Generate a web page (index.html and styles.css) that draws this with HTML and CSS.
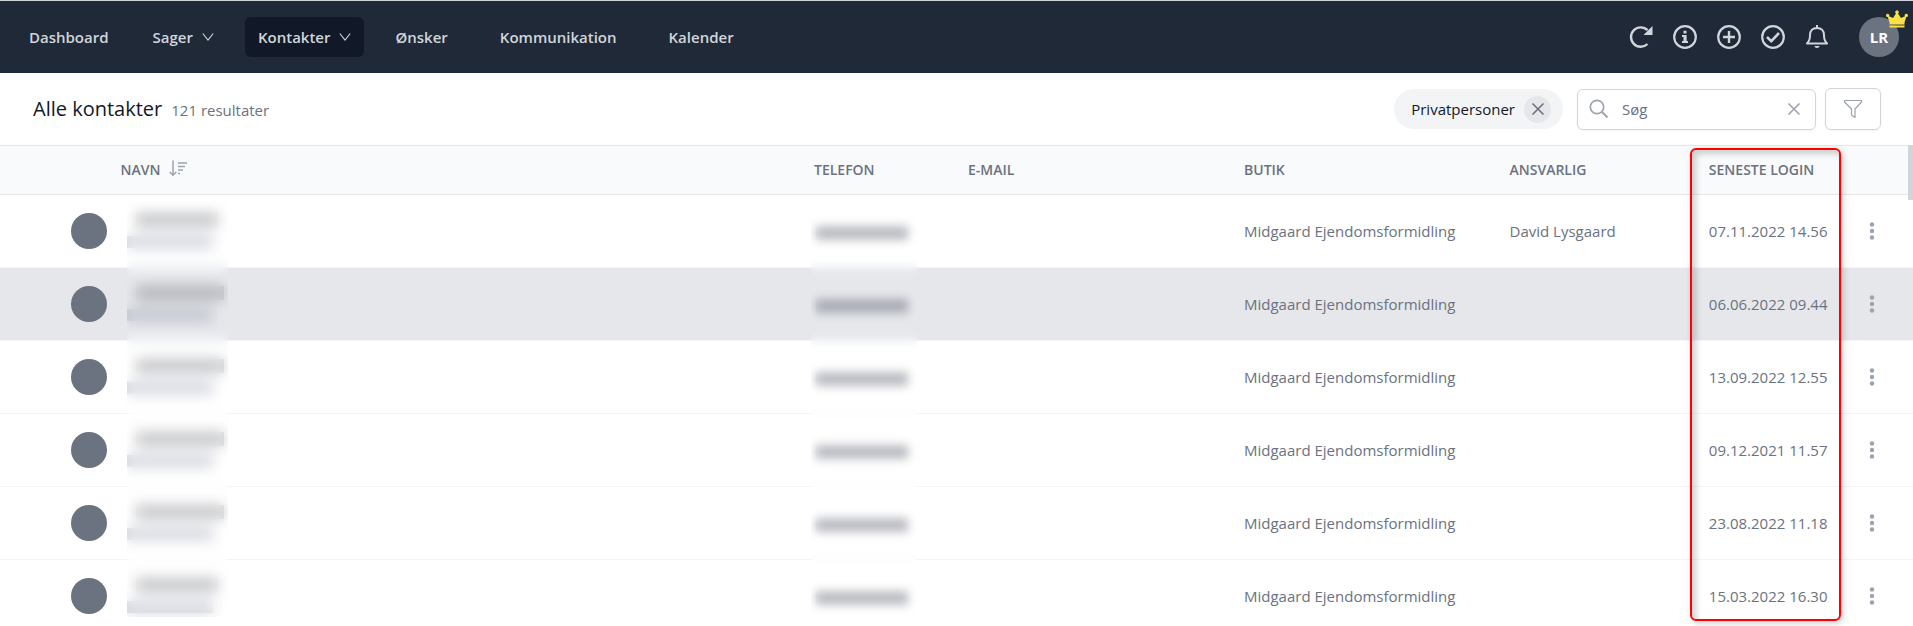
FILE: index.html
```html
<!DOCTYPE html>
<html lang="da">
<head>
    <meta charset="utf-8" />
    <title>Alle kontakter</title>
    <link rel="stylesheet" href="styles.css">
</head>
<body>
    <svg class="defs" aria-hidden="true">
        <symbol id="chevron" viewBox="0 0 12 10"><path d="M0.800 1.500 L6 8 L11.200 1.500" fill="none" stroke="currentColor" stroke-width="1.100" /></symbol>
        <symbol id="cross" viewBox="0 0 14 14"><path d="M1.500 1.500 L12.500 12.500 M12.500 1.500 L1.500 12.500" fill="none" stroke="currentColor" stroke-width="1.600" /></symbol>
        <symbol id="dots" viewBox="0 0 6 20"><g fill="currentColor"><circle cx="3" cy="3.500" r="2.200" /><circle cx="3" cy="10" r="2.200" /><circle cx="3" cy="16.500" r="2.200" /></g></symbol>
    </svg>

    <header class="topbar">
        <nav class="menu">
            <a href="#" class="menu-item">Dashboard</a>
            <a href="#" class="menu-item">Sager <svg class="chevron"><use href="#chevron" /></svg></a>
            <a href="#" class="menu-item active">Kontakter <svg class="chevron"><use href="#chevron" /></svg></a>
            <a href="#" class="menu-item">Ønsker</a>
            <a href="#" class="menu-item spaced">Kommunikation</a>
            <a href="#" class="menu-item spaced">Kalender</a>
        </nav>
        <div class="tools">
            <button class="tool" aria-label="Opdater">
                <svg viewBox="0 0 24 24"><path d="M18.500 19 A9.700 9.700 0 1 1 18.600 5.200" fill="none" stroke="currentColor" stroke-width="2.400" /><path d="M23.500 1 V10 H14.500 Z" fill="currentColor" /></svg>
            </button>
            <button class="tool" aria-label="Info">
                <svg viewBox="0 0 24 24"><circle cx="12" cy="12" r="10.800" fill="none" stroke="currentColor" stroke-width="2.200" /><path d="M10.500 5.800 h3 v2.600 h-3z M9 10 h4.600 v6 h1.400 v1.900 h-6 v-1.900 h1.500 v-4.100 h-1.500z" fill="currentColor" /></svg>
            </button>
            <button class="tool" aria-label="Opret">
                <svg viewBox="0 0 24 24"><circle cx="12" cy="12" r="10.800" fill="none" stroke="currentColor" stroke-width="2.200" /><path d="M12 6 V18 M6 12 H18" stroke="currentColor" stroke-width="2.400" /></svg>
            </button>
            <button class="tool" aria-label="Opgaver">
                <svg viewBox="0 0 24 24"><circle cx="12" cy="12" r="10.800" fill="none" stroke="currentColor" stroke-width="2.200" /><path d="M6 12 L10.300 16.200 L18 8" fill="none" stroke="currentColor" stroke-width="2.600" /></svg>
            </button>
            <button class="tool" aria-label="Notifikationer">
                <svg viewBox="0 0 24 24"><path d="M12 0 V3 M2 18.500 C4.500 16 5 14 5 10.200 C5 5.500 8 3 12 3 S19 5.500 19 10.200 C19 14 19.500 16 22 18.500 Z" fill="none" stroke="currentColor" stroke-width="2" stroke-linejoin="round" /><path d="M9.300 21 h5.400 a2.800 2.800 0 0 1 -5.400 0z" fill="currentColor" /></svg>
            </button>
            <button class="user">LR
                <svg class="crown" viewBox="0 0 22 18"><path d="M3.500 12.500 L1.800 7 A1.600 1.600 0 1 1 3 6.300 L7 8 L10 3.500 A1.700 1.700 0 1 1 12 3.500 L15 8 L19 6.300 A1.600 1.600 0 1 1 20.200 7 L18.500 12.500 V14 H3.500 Z M3.500 15.500 H18.500 V17.500 H3.500 Z" fill="#fde047" /><path d="M3.500 14 H18.500 V15.500 H3.500 Z" fill="#a3934f" /></svg>
            </button>
        </div>
    </header>

    <div class="pagehead">
        <h1>Alle kontakter</h1>
        <span class="count">121 resultater</span>
        <div class="filters">
            <div class="chip">
                Privatpersoner
                <button class="chip-remove" aria-label="Fjern"><svg><use href="#cross" /></svg></button>
            </div>
            <div class="search">
                <svg class="search-icon" viewBox="0 0 20 20"><circle cx="8" cy="8" r="6.700" fill="none" stroke="currentColor" stroke-width="1.700" /><path d="M13 13 L18.500 18.500" stroke="currentColor" stroke-width="2" /></svg>
                <input type="text" placeholder="Søg" aria-label="Søg">
                <button class="clear" aria-label="Ryd"><svg><use href="#cross" /></svg></button>
            </div>
            <button class="filter" aria-label="Filter">
                <svg viewBox="0 0 20 20"><path d="M1.500 1.500 H18.500 V3 L12 10 V18.500 L8.500 16 V10 L1.500 3 Z" fill="none" stroke="currentColor" stroke-width="1.200" stroke-linejoin="round" /></svg>
            </button>
        </div>
    </div>

    <main class="list">
        <table>
            <thead>
                <tr>
                    <th class="col-avatar"></th>
                    <th class="col-name">NAVN
                        <svg class="sort" viewBox="0 0 18 17"><path d="M4 0.500 V15 M0.700 12 L4 15.300 L7.300 12" fill="none" stroke="currentColor" stroke-width="1.500" /><path d="M9 3 H18 M9 6.500 H16 M9 10 H14 M9 13.500 H11" stroke="currentColor" stroke-width="1.500" /></svg>
                    </th>
                    <th class="col-phone">TELEFON</th>
                    <th class="col-mail">E-MAIL</th>
                    <th class="col-shop">BUTIK</th>
                    <th class="col-owner">ANSVARLIG</th>
                    <th class="col-login">SENESTE LOGIN</th>
                    <th class="col-more"></th>
                </tr>
            </thead>
            <tbody>
                <tr>
                    <td><span class="avatar"></span></td>
                    <td><span class="name"></span><span class="sub"></span></td>
                    <td><span class="phone"></span></td>
                    <td></td>
                    <td>Midgaard Ejendomsformidling</td>
                    <td>David Lysgaard</td>
                    <td>07.11.2022 14.56</td>
                    <td><button class="more" aria-label="Mere"><svg><use href="#dots" /></svg></button></td>
                </tr>
                <tr class="hover">
                    <td><span class="avatar"></span></td>
                    <td><span class="name wide"></span><span class="sub"></span></td>
                    <td><span class="phone"></span></td>
                    <td></td>
                    <td>Midgaard Ejendomsformidling</td>
                    <td></td>
                    <td>06.06.2022 09.44</td>
                    <td><button class="more" aria-label="Mere"><svg><use href="#dots" /></svg></button></td>
                </tr>
                <tr>
                    <td><span class="avatar"></span></td>
                    <td><span class="name wide"></span><span class="sub"></span></td>
                    <td><span class="phone"></span></td>
                    <td></td>
                    <td>Midgaard Ejendomsformidling</td>
                    <td></td>
                    <td>13.09.2022 12.55</td>
                    <td><button class="more" aria-label="Mere"><svg><use href="#dots" /></svg></button></td>
                </tr>
                <tr>
                    <td><span class="avatar"></span></td>
                    <td><span class="name wide"></span><span class="sub"></span></td>
                    <td><span class="phone"></span></td>
                    <td></td>
                    <td>Midgaard Ejendomsformidling</td>
                    <td></td>
                    <td>09.12.2021 11.57</td>
                    <td><button class="more" aria-label="Mere"><svg><use href="#dots" /></svg></button></td>
                </tr>
                <tr>
                    <td><span class="avatar"></span></td>
                    <td><span class="name wide"></span><span class="sub"></span></td>
                    <td><span class="phone"></span></td>
                    <td></td>
                    <td>Midgaard Ejendomsformidling</td>
                    <td></td>
                    <td>23.08.2022 11.18</td>
                    <td><button class="more" aria-label="Mere"><svg><use href="#dots" /></svg></button></td>
                </tr>
                <tr>
                    <td><span class="avatar"></span></td>
                    <td><span class="name"></span><span class="sub"></span></td>
                    <td><span class="phone"></span></td>
                    <td></td>
                    <td>Midgaard Ejendomsformidling</td>
                    <td></td>
                    <td>15.03.2022 16.30</td>
                    <td><button class="more" aria-label="Mere"><svg><use href="#dots" /></svg></button></td>
                </tr>
            </tbody>
        </table>
        <!-- personal data is blurred out -->
        <div class="blur blur-name"></div>
        <div class="blur blur-phone"></div>
        <div class="marker"></div>
        <div class="scrollbar"></div>
    </main>
</body>
</html>
```

FILE: styles.css
```css
*
{
    box-sizing: border-box;
}

body
{
    margin: 0;
    height: 100vh;
    overflow: hidden;
    display: flex;
    flex-direction: column;
    background: #fff;
    color: #6b7280;
    font: 15px/24px 'Segoe UI', 'Open Sans', 'Noto Sans', sans-serif;
}

button
{
    display: flex;
    align-items: center;
    justify-content: center;
    padding: 0;
    border: 0;
    background: none;
    color: inherit;
    font: inherit;
}

.defs
{
    position: absolute;
    width: 0;
    height: 0;
}

/* top bar */
.topbar
{
    display: flex;
    align-items: center;
    justify-content: space-between;
    flex: none;
    height: 73px;
    padding: 0 14px 0 16px;
    border-top: 1px solid #d1d5db;
    background: #1f2937;
    color: #d1d5db;
}

.menu
{
    display: flex;
    gap: 18px;
}

.menu-item
{
    display: flex;
    align-items: center;
    gap: 9px;
    height: 40px;
    padding: 0 13px;
    border-radius: 6px;
    color: inherit;
    font-weight: 600;
    text-decoration: none;
}

    .menu-item.active
    {
        background: #111827;
    }

    .menu-item.spaced
    {
        margin-left: 8px;
    }

.chevron
{
    width: 12px;
    height: 10px;
}

.tools
{
    display: flex;
    align-items: center;
    gap: 20px;
}

.tool svg
{
    width: 24px;
    height: 24px;
}

.user
{
    position: relative;
    width: 40px;
    height: 40px;
    margin-left: 10px;
    border-radius: 50%;
    background: #6b7280;
    color: #fff;
    font-weight: 700;
}

.crown
{
    position: absolute;
    top: -7px;
    right: -9px;
    width: 22px;
    height: 18px;
}

/* page head */
.pagehead
{
    display: flex;
    align-items: center;
    flex: none;
    height: 72px;
    padding: 0 32px 0 33px;
}

h1
{
    margin: 0 9px 0 0;
    color: #111827;
    font-size: 20px;
    font-weight: 500;
}

.count
{
    padding-top: 2px;
}

.filters
{
    display: flex;
    align-items: center;
    margin-left: auto;
}

.chip
{
    display: flex;
    align-items: center;
    gap: 9px;
    height: 40px;
    margin-right: 14px;
    padding: 0 12px 0 17px;
    border-radius: 20px;
    background: #f3f4f6;
    color: #111827;
    font-weight: 500;
}

.chip-remove
{
    width: 27px;
    height: 27px;
    border-radius: 50%;
    background: #e5e7eb;
    color: #6b7280;
}

.chip-remove svg, .clear svg
{
    width: 14px;
    height: 14px;
}

.search
{
    display: flex;
    align-items: center;
    width: 239px;
    height: 41px;
    margin-right: 9px;
    padding: 0 14px 0 11px;
    border: 1px solid #d1d5db;
    border-radius: 6px;
    box-shadow: 0 1px 2px rgba(0, 0, 0, 0.05);
    color: #9ca3af;
}

    .search input
    {
        flex: 1;
        min-width: 0;
        padding: 0 0 0 13px;
        border: 0;
        outline: 0;
        background: none;
        font: inherit;
    }

    .search input::placeholder
    {
        color: #6b7280;
    }

.search-icon
{
    width: 20px;
    height: 20px;
}

.filter
{
    width: 56px;
    height: 42px;
    border: 1px solid #d1d5db;
    border-radius: 6px;
    box-shadow: 0 1px 2px rgba(0, 0, 0, 0.05);
    color: #9ca3af;
}

    .filter svg
    {
        width: 20px;
        height: 20px;
    }

/* contact list */
.list
{
    position: relative;
    flex: 1;
    min-height: 0;
    overflow: hidden;
}

table
{
    width: 100%;
    table-layout: fixed;
    border-collapse: separate;
    border-spacing: 0;
}

th, td
{
    padding: 0;
    text-align: left;
    white-space: nowrap;
}

th
{
    height: 50px;
    border-top: 1px solid #e5e7eb;
    border-bottom: 1px solid #e5e7eb;
    background: #f9fafb;
    font-size: 14px;
    font-weight: 600;
}

td
{
    height: 73px;
    padding-bottom: 1px;
    border-bottom: 1px solid #f3f4f6;
}

.hover td
{
    background: #e5e7eb;
}

.col-avatar { width: 6.3%; }
.col-name { width: 36.25%; }
.col-phone { width: 8.05%; }
.col-mail { width: 14.43%; }
.col-shop { width: 13.88%; }
.col-owner { width: 10.42%; }
.col-login { width: 6.4%; }
.col-more { width: 4.27%; }

.sort
{
    width: 18px;
    height: 17px;
    margin-left: 5px;
    color: #9ca3af;
    vertical-align: -2px;
}

.avatar
{
    display: block;
    width: 36px;
    height: 36px;
    margin: 0 14px 0 auto;
    border-radius: 50%;
    background: #6b7280;
}

.name, .sub, .phone
{
    display: block;
    height: 14px;
}

.name
{
    width: 82px;
    margin: 0 0 9px 15px;
    background: rgba(55, 60, 68, 0.3);
}

    .name.wide
    {
        width: 88px;
    }

.sub
{
    height: 12px;
    width: 86px;
    margin-left: 6px;
    background: rgba(107, 114, 140, 0.3);
}

.phone
{
    width: 92px;
    margin: 4px 0 0 2px;
    background: rgba(55, 60, 75, 0.34);
}

.more
{
    width: 100%;
    color: #9ca3af;
}

    .more svg
    {
        width: 6px;
        height: 20px;
    }

.blur
{
    position: absolute;
    top: 56px;
    bottom: 9px;
}

.blur-name
{
    left: 6.64%;
    width: 101px;
    backdrop-filter: blur(7px);
}

.blur-phone
{
    left: 42.4%;
    width: 107px;
    backdrop-filter: blur(5px);
}

.marker
{
    position: absolute;
    top: 3px;
    bottom: 5px;
    left: 88.35%;
    width: 151px;
    border: 2px solid #f00;
    border-radius: 6px;
    box-shadow: 2px 2px 6px rgba(0, 0, 0, 0.2), inset 4px 4px 6px rgba(0, 0, 0, 0.18);
}

.scrollbar
{
    position: absolute;
    top: 0;
    right: 0;
    width: 5px;
    height: 55px;
    background: #d1d5db;
}
```
